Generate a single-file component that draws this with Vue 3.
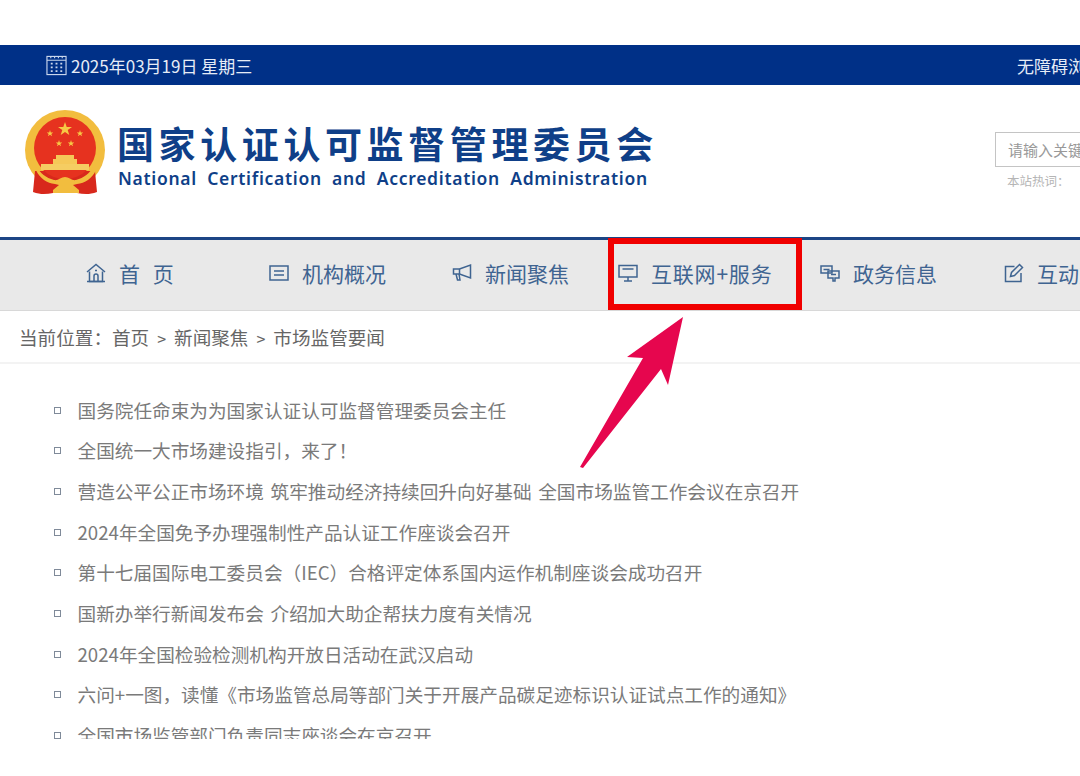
<template>
  <div class="page">
    <div class="topbar">
      <div class="date">
        <svg class="cal" viewBox="0 0 22 22" fill="none" stroke="#c9d6ec" stroke-width="1.2">
          <rect x="1" y="1.5" width="20" height="19" />
          <path d="M1 5.5h20M5 1.5v2M9 1.5v2M13 1.5v2M17 1.5v2" />
          <path d="M5 9h2M10 9h2M15 9h2M5 13h2M10 13h2M15 13h2M5 17h2M10 17h2M15 17h2" stroke-width="1.8" />
        </svg>
        <span>2025年03月19日 星期三</span>
      </div>
      <span class="access">无障碍浏览</span>
    </div>

    <header class="head">
      <svg class="emblem" viewBox="0 0 82 86">
        <circle cx="41" cy="41" r="40" fill="#f2bd3e" />
        <path d="M11 62l-2 21c8 3 14 2 20 1h24c6 1 12 2 20-1l-2-21z" fill="#d8281c" />
        <circle cx="41" cy="39" r="31" fill="#e6321f" />
        <path d="M41 13l1.7 5h5.3l-4.300 3.100 1.600 5-4.300-3.100-4.300 3.100 1.600-5-4.300-3.100h5.300z" fill="#f7c945" />
        <path d="M26 21l.8 2.400h2.500l-2 1.500.8 2.400-2.100-1.500-2.100 1.500.8-2.400-2-1.500h2.500zM56 21l.8 2.400h2.500l-2 1.500.8 2.400-2.100-1.500-2.100 1.500.8-2.400-2-1.500h2.500zM35 31l.8 2.400h2.500l-2 1.500.8 2.400-2.100-1.500-2.100 1.500.8-2.400-2-1.500h2.500zM47 31l.8 2.400h2.500l-2 1.500.8 2.400-2.100-1.500-2.100 1.500.8-2.400-2-1.500h2.500z" fill="#f7c945" />
        <path d="M29 55v-5h3v-4h18v4h3v5z" fill="#f5c858" />
        <path d="M17 55h48v6H17z" fill="#f5cd62" />
        <path d="M13 58c3 6 9 11 17 13 4 1 7-3 11-3s7 4 11 3c8-2 14-7 17-13l3 3c-4 9-11 13-19 14l-4 1 6 5v3H29v-3l6-5-4-1c-8-1-15-5-19-14z" fill="#f2bd3e" />
      </svg>
      <div class="brand">
        <div class="cn">国家认证认可监督管理委员会</div>
        <div class="en">National Certification and Accreditation Administration</div>
      </div>
      <div class="search">
        <div class="search-box">请输入关键字</div>
        <div class="hot">本站热词：</div>
      </div>
    </header>

    <nav class="nav">
      <div v-for="item in navItems" :key="item.label" class="nav-item" :class="item.cls">
        <svg class="nav-icon" viewBox="0 0 20 20" fill="none" stroke="#3f6491" stroke-width="1.5">
          <path v-for="(d, i) in item.paths" :key="i" :d="d" />
        </svg>
        <span>{{ item.label }}</span>
      </div>
    </nav>

    <div class="crumb">
      当前位置：首页<i>&gt;</i>新闻聚焦<i>&gt;</i>市场监管要闻
    </div>

    <ul class="list">
      <li v-for="title in titles" :key="title">{{ title }}</li>
    </ul>

    <!-- 标注：红框和箭头 -->
    <div class="mark"></div>
    <svg class="arrow" viewBox="0 0 110 170">
      <path d="M104 17L48 57 64 58 1 167 4 168 82 69 89 85z" fill="#e6064e" />
    </svg>
  </div>
</template>

<script setup>
const navItems = [
  { label: '首 页', cls: 'w183 spaced', paths: ['M1 9l9-7.500 9 7.500', 'M3.500 8.500V18.500h13V8.500', 'M1 18.500h18', 'M8 18v-5a2 2 0 0 1 4 0v5', 'M9 7.500h2'] },
  { label: '机构概况', cls: 'w183', paths: ['M1 3h18v14H1z', 'M5 8h10M5 12h10'] },
  { label: '新闻聚焦', cls: 'w166', paths: ['M1.500 6h6L18.500 2v13L7.500 11H1.500z', 'M4 11l1.500 6h2.500l-1-6', 'M7.500 6v5'] },
  { label: '互联网+服务', cls: 'w202 wide', paths: ['M1 2.500h18v11.500H1z', 'M4.500 6h11', 'M6 18h8M10 14v4'] },
  { label: '政务信息', cls: 'w184', paths: ['M1 3h11v7H1z', 'M3.500 6.500h6', 'M8 8h11v7h-4v3h-2v-3H8z', 'M11 11.500h5'] },
  { label: '互动交流', cls: '', paths: ['M17 10v8.500H1.500V3.500h9', 'M6.500 13.500l1-4L15.500 1.500l3 3-8 8z'] }
]

const titles = [
  '国务院任命束为为国家认证认可监督管理委员会主任',
  '全国统一大市场建设指引，来了！',
  '营造公平公正市场环境 筑牢推动经济持续回升向好基础 全国市场监管工作会议在京召开',
  '2024年全国免予办理强制性产品认证工作座谈会召开',
  '第十七届国际电工委员会（IEC）合格评定体系国内运作机制座谈会成功召开',
  '国新办举行新闻发布会 介绍加大助企帮扶力度有关情况',
  '2024年全国检验检测机构开放日活动在武汉启动',
  '六问+一图，读懂《市场监管总局等部门关于开展产品碳足迹标识认证试点工作的通知》',
  '全国市场监管部门负责同志座谈会在京召开'
]
</script>

<style>
html, body {
  background: #fff;
  overflow: hidden;
}
</style>

<style scoped>
.page {
  position: relative;
  width: 1080px;
  height: 776px;
  padding-top: 45px;
  box-sizing: border-box;
  overflow: hidden;
  font-family: "Noto Sans CJK SC", "Noto Sans", sans-serif;
}

.topbar {
  height: 40px;
  background: #003087;
  color: #e6ecf6;
  display: flex;
  align-items: center;
  justify-content: space-between;
  padding-left: 46px;
  font-size: 17px;
  white-space: nowrap;
}
.date {
  display: flex;
  align-items: center;
  gap: 4px;
}
.cal {
  width: 21px;
  height: 21px;
  flex: none;
}
.access {
  margin-right: -22px;
  flex: none;
}

.head {
  height: 152px;
  display: flex;
  white-space: nowrap;
}
.emblem {
  width: 82px;
  height: 86px;
  margin: 24px 0 0 24px;
  flex: none;
}
.brand {
  margin-left: 11px;
  padding-top: 34px;
  color: #0f3f88;
  font-weight: 700;
  width: 878px;
  flex: none;
}
.cn {
  font-size: 37px;
  line-height: 48px;
  letter-spacing: 4.6px;
}
.en {
  font-size: 17.5px;
  line-height: 24px;
  margin: -1px 0 0 1px;
  word-spacing: 5px;
  letter-spacing: 0.7px;
  font-family: "Noto Sans", sans-serif;
  font-weight: 600;
}
.search {
  padding-top: 47px;
  flex: none;
}
.search-box {
  width: 140px;
  height: 35px;
  box-sizing: border-box;
  border: 1.5px solid #c4c4c4;
  padding-left: 12px;
  line-height: 33px;
  font-size: 15px;
  color: #999;
}
.hot {
  margin: 4px 0 0 12px;
  font-size: 12.5px;
  color: #b5b5b5;
}

.nav {
  height: 70px;
  box-sizing: content-box;
  border-top: 3px solid #1c4585;
  border-bottom: 1px solid #d8d8d8;
  background: #e9e9e9;
  display: flex;
  align-items: center;
  padding-left: 86px;
  font-size: 21px;
  color: #3f6491;
  white-space: nowrap;
}
.nav-item {
  display: flex;
  align-items: center;
  gap: 13px;
  flex: none;
  margin-top: -4px;
}
.nav-icon {
  width: 20px;
  height: 20px;
  flex: none;
}
.w183 { width: 183px; }
.w166 { width: 166px; }
.w202 { width: 202px; }
.w184 { width: 184px; }
.spaced span {
  word-spacing: 8px;
}
.wide span {
  letter-spacing: 0.8px;
}

.crumb {
  height: 53px;
  box-sizing: border-box;
  border-bottom: 2px solid #f3f3f3;
  padding-left: 19px;
  line-height: 51px;
  font-size: 18.6px;
  color: #666;
  white-space: nowrap;
}
.crumb i {
  font-style: normal;
  font-size: 16px;
  margin: 0 8px;
}

.list {
  list-style: none;
  margin: 25.6px 0 0;
  padding: 0 0 0 54px;
  height: 349px;
  overflow: hidden;
}
.list li {
  position: relative;
  height: 40.7px;
  line-height: 40.7px;
  padding-left: 23.5px;
  font-size: 18.65px;
  word-spacing: 2.5px;
  color: #7a7a7a;
  white-space: nowrap;
}
.list li::before {
  content: "";
  position: absolute;
  left: 0;
  top: 17px;
  width: 7px;
  height: 7px;
  border: 1px solid #7f8a99;
  box-sizing: border-box;
}

.mark {
  position: absolute;
  left: 608px;
  top: 238px;
  width: 194px;
  height: 72px;
  box-sizing: border-box;
  border: 6px solid #f00000;
}
.arrow {
  position: absolute;
  left: 579px;
  top: 300px;
  width: 110px;
  height: 170px;
}
</style>
